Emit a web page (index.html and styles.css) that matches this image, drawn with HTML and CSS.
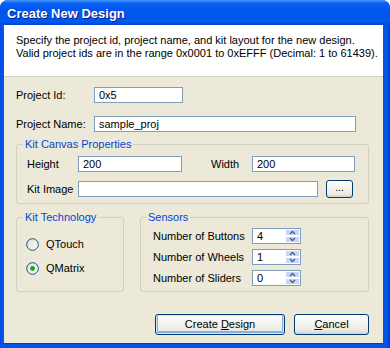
FILE: index.html
```html
<!DOCTYPE html>
<html>
<head>
<meta charset="utf-8">
<link rel="stylesheet" href="styles.css">
</head>
<body>
<div class="window">
  <div class="titlebar">Create New Design</div>
  <div class="client">
    <div class="header">
      <p>Specify the project id, project name, and kit layout for the new design.</p>
      <p>Valid project ids are in the range 0x0001 to 0xEFFF (Decimal: 1 to 61439).</p>
    </div>
    <div class="body">
      <div class="row">
        <span class="lbl-main">Project Id:</span>
        <span class="tb tb-id">0x5</span>
      </div>
      <div class="row row-name">
        <span class="lbl-main">Project Name:</span>
        <span class="tb tb-name">sample_proj</span>
      </div>

      <fieldset class="group group-canvas">
        <legend>Kit Canvas Properties</legend>
        <div class="group-inner">
          <div class="row">
            <span class="lbl-canvas">Height</span>
            <span class="tb tb-height">200</span>
            <span class="lbl-width">Width</span>
            <span class="tb tb-width">200</span>
          </div>
          <div class="row row-image">
            <span class="lbl-canvas">Kit Image</span>
            <span class="tb tb-image"></span>
            <span class="btn btn-browse">...</span>
          </div>
        </div>
      </fieldset>

      <div class="lower">
        <fieldset class="group group-tech">
          <legend>Kit Technology</legend>
          <div class="group-inner">
            <div class="radio-row">
              <svg class="radio" width="13" height="13" viewBox="0 0 13 13">
                <defs>
                  <linearGradient id="rg1" x1="0" y1="0" x2="1" y2="1">
                    <stop offset="0" stop-color="#DCDCD5"/>
                    <stop offset="1" stop-color="#FFFFFF"/>
                  </linearGradient>
                </defs>
                <circle cx="6.5" cy="6.5" r="5.8" fill="url(#rg1)" stroke="#1C5180" stroke-width="1"/>
              </svg>
              <span>QTouch</span>
            </div>
            <div class="radio-row">
              <svg class="radio" width="13" height="13" viewBox="0 0 13 13">
                <circle cx="6.5" cy="6.5" r="5.8" fill="url(#rg1)" stroke="#1C5180" stroke-width="1"/>
                <circle cx="6.5" cy="6.5" r="2.4" fill="#21A121"/>
              </svg>
              <span>QMatrix</span>
            </div>
          </div>
        </fieldset>

        <fieldset class="group group-sensors">
          <legend>Sensors</legend>
          <div class="group-inner">
            <div class="row srow">
              <span class="lbl-sensor">Number of Buttons</span>
              <span class="tb tb-spin">4
                <svg class="spin" width="15" height="14" viewBox="0 0 15 14">
                  <rect x="0.5" y="0.5" width="14" height="6" rx="1" fill="#C6D7FA" stroke="#FFFFFF"/>
                  <rect x="0.5" y="7.5" width="14" height="6" rx="1" fill="#C6D7FA" stroke="#FFFFFF"/>
                  <path d="M5 5 L7.5 2.5 L10 5" fill="none" stroke="#4D6185" stroke-width="1.4"/>
                  <path d="M5 9 L7.5 11.5 L10 9" fill="none" stroke="#4D6185" stroke-width="1.4"/>
                </svg>
              </span>
            </div>
            <div class="row srow">
              <span class="lbl-sensor">Number of Wheels</span>
              <span class="tb tb-spin">1
                <svg class="spin" width="15" height="14" viewBox="0 0 15 14">
                  <rect x="0.5" y="0.5" width="14" height="6" rx="1" fill="#C6D7FA" stroke="#FFFFFF"/>
                  <rect x="0.5" y="7.5" width="14" height="6" rx="1" fill="#C6D7FA" stroke="#FFFFFF"/>
                  <path d="M5 5 L7.5 2.5 L10 5" fill="none" stroke="#4D6185" stroke-width="1.4"/>
                  <path d="M5 9 L7.5 11.5 L10 9" fill="none" stroke="#4D6185" stroke-width="1.4"/>
                </svg>
              </span>
            </div>
            <div class="row srow">
              <span class="lbl-sensor">Number of Sliders</span>
              <span class="tb tb-spin">0
                <svg class="spin" width="15" height="14" viewBox="0 0 15 14">
                  <rect x="0.5" y="0.5" width="14" height="6" rx="1" fill="#C6D7FA" stroke="#FFFFFF"/>
                  <rect x="0.5" y="7.5" width="14" height="6" rx="1" fill="#C6D7FA" stroke="#FFFFFF"/>
                  <path d="M5 5 L7.5 2.5 L10 5" fill="none" stroke="#4D6185" stroke-width="1.4"/>
                  <path d="M5 9 L7.5 11.5 L10 9" fill="none" stroke="#4D6185" stroke-width="1.4"/>
                </svg>
              </span>
            </div>
          </div>
        </fieldset>
      </div>

      <div class="buttons">
        <span class="btn btn-default">Create <u>D</u>esign</span>
        <span class="btn btn-cancel"><u>C</u>ancel</span>
      </div>
    </div>
  </div>
</div>
</body>
</html>
```

FILE: styles.css
```css
* { box-sizing: border-box; margin: 0; padding: 0; }
html, body { width: 390px; height: 348px; background: #ffffff; overflow: hidden; }
body { font-family: "Liberation Sans", Arial, sans-serif; font-size: 11px; line-height: 13px; color: #000; }

.window {
  width: 390px;
  height: 348px;
  display: flex;
  flex-direction: column;
  background: linear-gradient(to right, #0831D9 0, #0058EE 1px, #0055E5 3px, #0055E5 calc(100% - 3px), #0831D9 100%);
  border-radius: 8px 8px 0 0;
  overflow: hidden;
}

.titlebar {
  height: 25px;
  padding: 2px 0 0 7px;
  color: #fff;
  font-size: 13px;
  font-weight: bold;
  line-height: 23px;
  text-shadow: 1px 1px #0A1883;
  background: linear-gradient(#4C9BFF 0, #0A62F4 3px, #0056EA 40%, #005AEE 85%, #0047D6 100%);
}

.client {
  flex: 1;
  margin: 0 7px 5px 4px;
  background: #ECE9D8;
  display: flex;
  flex-direction: column;
  box-shadow: 0 1px 0 #0831D9;
}

.header {
  height: 52px;
  background: #ffffff;
  padding: 9px 0 0 12px;
  border-bottom: 1px solid #D6D3C6;
}

.body {
  padding: 10px 14px 0 12px;
}

.row {
  display: flex;
  align-items: center;
  height: 16px;
}
.row-name { margin-top: 13px; }

.lbl-main { width: 78px; }

.tb {
  display: flex;
  align-items: center;
  height: 16px;
  background: #fff;
  border: 1px solid #7F9DB9;
  padding-left: 4px;
  line-height: 14px;
}
.tb-id { width: 89px; }
.tb-name { width: 262px; }

.group {
  border: 1px solid #D0D0BF;
  border-radius: 3px;
  min-width: 0;
  padding: 0;
}
.group legend {
  color: #0046D5;
  padding: 0 2px;
  margin-left: 6px;
  line-height: 13px;
}

.group-canvas { margin-top: 6px; }
.group-canvas .group-inner { padding: 5px 0 5px 10px; }
.lbl-canvas { width: 51px; }
.tb-height { width: 104px; }
.lbl-width { width: 41px; margin-left: 29px; }
.tb-width { width: 103px; }
.row-image { margin-top: 8px; height: 18px; }
.tb-image { width: 240px; }

.btn {
  display: block;
  text-align: center;
  border: 1px solid #003C74;
  border-radius: 3px;
  background: linear-gradient(#FFFFFF 0, #F4F3EE 40%, #ECEBE6 80%, #D6D0C5 100%);
}
.btn-browse {
  width: 27px;
  height: 18px;
  margin-left: 8px;
  font-size: 10px;
  line-height: 13px;
}

.lower {
  display: flex;
  gap: 16px;
  margin-top: 7px;
}

.group-tech { width: 108px; }
.group-tech .group-inner { padding: 14px 0 5px 9px; }
.radio-row {
  display: flex;
  align-items: center;
  gap: 7px;
  height: 13px;
}
.radio-row + .radio-row { margin-top: 11px; }
.radio { display: block; }

.group-sensors { flex: 1; }
.group-sensors legend { margin-left: 5px; }
.group-sensors .group-inner { padding: 4px 0 5px 12px; }
.srow + .srow { margin-top: 5px; }
.lbl-sensor { width: 99px; }
.tb-spin {
  width: 49px;
  position: relative;
}
.spin {
  position: absolute;
  right: 0;
  top: 0;
}

.buttons {
  display: flex;
  justify-content: flex-end;
  gap: 9px;
  margin-top: 22px;
}
.buttons .btn { height: 21px; line-height: 19px; }
.btn-default {
  width: 130px;
  box-shadow: inset 0 0 0 1px #CEE7FF, inset 0 -1px 0 2px #89ADE4;
}
.btn-cancel { width: 75px; }
```
